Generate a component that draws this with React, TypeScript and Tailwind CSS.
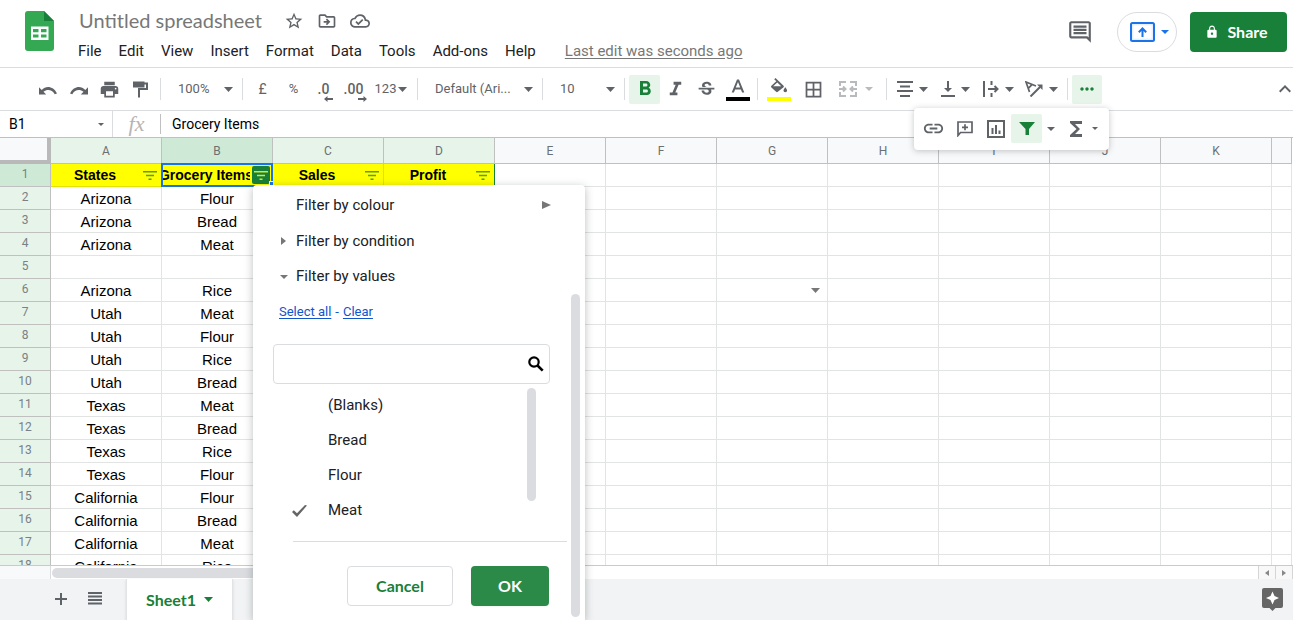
import React from 'react';
import clsx from 'clsx';
import {
  MdBorderAll,
  MdFormatBold,
  MdFormatItalic,
  MdFunctions,
  MdInsertLink,
  MdKeyboardArrowUp,
  MdLock,
  MdMoreHoriz,
  MdOutlineCloudDone,
  MdOutlineDriveFileMove,
  MdOutlineInsertComment,
  MdPrint,
  MdStarBorder,
  MdStrikethroughS,
} from 'react-icons/md';

const menus = ['File', 'Edit', 'View', 'Insert', 'Format', 'Data', 'Tools', 'Add-ons', 'Help'];

const columns = ['A', 'B', 'C', 'D', 'E', 'F', 'G', 'H', 'I', 'J', 'K', ''];

const headers = ['States', 'Grocery Items', 'Sales', 'Profit'];

const rows = [
  ['Arizona', 'Flour'],
  ['Arizona', 'Bread'],
  ['Arizona', 'Meat'],
  ['', ''],
  ['Arizona', 'Rice'],
  ['Utah', 'Meat'],
  ['Utah', 'Flour'],
  ['Utah', 'Rice'],
  ['Utah', 'Bread'],
  ['Texas', 'Meat'],
  ['Texas', 'Bread'],
  ['Texas', 'Rice'],
  ['Texas', 'Flour'],
  ['California', 'Flour'],
  ['California', 'Bread'],
  ['California', 'Meat'],
  ['California', 'Rice'],
];

const filterValues = [
  { label: '(Blanks)', checked: false },
  { label: 'Bread', checked: false },
  { label: 'Flour', checked: false },
  { label: 'Meat', checked: true },
];

const Caret = ({ className = 'h-1 w-2' }: { className?: string }) => (
  <svg viewBox="0 0 8 4" preserveAspectRatio="none" className={clsx('shrink-0 fill-current', className)}>
    <path d="M0 0h8L4 4z" />
  </svg>
);

const Separator = () => <div className="mx-1 h-[22px] w-px shrink-0 bg-[#dadce0]" />;

type ToolProps = {
  label: string;
  className?: string;
  children: React.ReactNode;
};

const Tool = ({ label, className = 'w-[31px]', children }: ToolProps) => (
  <button
    type="button"
    aria-label={label}
    className={clsx('flex h-[29px] shrink-0 items-center justify-center rounded-xs', className)}
  >
    {children}
  </button>
);

const ToolSelect = ({ label, value, className }: { label: string; value: string; className: string }) => (
  <label className={clsx('flex h-[29px] shrink-0 items-center pr-[5px] pl-[13px]', className)}>
    <select aria-label={label} className="min-w-0 flex-1 appearance-none bg-transparent text-[13px] outline-none">
      <option>{value}</option>
    </select>
    <Caret className="h-[5px] w-[9px]" />
  </label>
);

const SheetsLogo = () => (
  <svg viewBox="0 0 29 40" className="h-10 w-[29px] shrink-0">
    <path d="M3 0h16l10 10v27a3 3 0 0 1-3 3H3a3 3 0 0 1-3-3V3a3 3 0 0 1 3-3z" fill="#34a853" />
    <path d="M19 0l10 10H19z" fill="#188038" />
    <path d="M6 15.500h17.500v13.500H6zM8 18v3.200h5.500V18zM16 18v3.200h5.500V18zM8 23.400v3.200h5.500v-3.200zM16 23.400v3.200h5.500v-3.200z" fill="#fff" fillRule="evenodd" />
  </svg>
);

const PresentIcon = () => (
  <svg viewBox="0 0 25 20" className="h-5 w-[25px]">
    <rect x="1" y="1" width="23" height="18" rx="1.500" fill="#e8f0fe" stroke="#1a73e8" strokeWidth="2" />
    <rect x="3.500" y="3.500" width="18" height="13" fill="#fff" />
    <path d="M12.500 15V7M8.800 10.200l3.700-3.700 3.700 3.700" fill="none" stroke="#1a73e8" strokeWidth="2" />
  </svg>
);

const UndoIcon = ({ className }: { className?: string }) => (
  <svg viewBox="0 0 18 9" className={clsx('mt-[2px] h-[9px] w-[18px]', className)}>
    <path d="M0 1.200V8.500h7.200L4.500 5.800C8 3 13 3.300 15.700 8.200l2.300-.8C14.500 0 7 -.9 2.700 3.900z" fill="currentColor" />
  </svg>
);

const PaintIcon = () => (
  <svg viewBox="0 0 15 17" className="h-[17px] w-[15px] fill-none stroke-current">
    <path d="M0 3.500h11.500" strokeWidth="6" />
    <path d="M11 2.500h3v5.500H6v8.500" strokeWidth="2" />
  </svg>
);

const DecimalIcon = ({ text, right }: { text: string; right?: boolean }) => (
  <span className="relative text-sm leading-4 font-medium">
    {text}
    <svg viewBox="0 0 9 6" className={clsx('absolute -right-1 -bottom-[5px] h-[6px] w-[9px] fill-current', right && 'rotate-180')}>
      <path d="M0 3l3.500-3v2H9v2H3.500v2z" />
    </svg>
  </span>
);

const TextColourIcon = () => (
  <svg viewBox="0 0 24 24" className="h-6 w-6">
    <path d="M11 2.500L5.700 15.500h2.200l1.200-3h5.800l1.200 3h2.200L13 2.500h-2zm-1.200 8L12 4.900l2.200 5.600z" fill="currentColor" />
    <path d="M0 20h24v4H0z" fill="#000" />
  </svg>
);

const FillColourIcon = () => (
  <svg viewBox="0 0 24 24" className="h-6 w-6">
    <path d="M16.600 8.800L8.500 1 7.200 2.300l2.100 2L4.400 8.700a1.200 1.200 0 0 0 0 1.800l4.700 4.300c.6.500 1.200.5 1.700 0l5.800-4.500c.4-.5.400-1 0-1.500zM6.200 9.200l4.100-3.800 3.900 3.800zM18.300 10.300s-1.800 2-1.800 3.200a1.800 1.800 0 0 0 3.600 0c0-1.200-1.800-3.200-1.800-3.200z" fill="currentColor" />
    <path d="M0 20h24v4H0z" fill="#ff0" />
  </svg>
);

const MergeIcon = () => (
  <svg viewBox="0 0 18 16" className="h-4 w-[18px] fill-none stroke-current stroke-2">
    <path d="M7 1H1v4M11 1h6v4M7 15H1v-4M11 15h6v-4M0 8h6M18 8h-6M4 5.500L6.500 8 4 10.500M14 5.500L11.500 8l2.500 2.500" />
  </svg>
);

const AlignIcon = () => (
  <svg viewBox="0 0 16 16" className="h-4 w-4 fill-none stroke-current stroke-2">
    <path d="M0 1h16M3 5.500h10M0 10h16M3 15h10" />
  </svg>
);

const BottomIcon = () => (
  <svg viewBox="0 0 14 16" className="h-4 w-[14px] fill-current">
    <path d="M6 0h2v7h3l-4 4-4-4h3zM0 14h14v2H0z" />
  </svg>
);

const WrapIcon = () => (
  <svg viewBox="0 0 16 16" className="h-4 w-4 fill-none stroke-current stroke-2">
    <path d="M1 0v16M8.500 0v4M8.500 12v4M5 8h9M11.500 5l3 3-3 3" />
  </svg>
);

const RotateIcon = () => (
  <svg viewBox="0 0 18 16" className="h-4 w-[18px] fill-none stroke-current">
    <path d="M4.500 11L1 1l10 4M3.500 7.200l4-4" strokeWidth="1.700" />
    <path d="M5.500 15.500L15 6" strokeWidth="2" />
    <path d="M12 3.500h5.500V9z" className="fill-current" stroke="none" />
  </svg>
);

const CommentAddIcon = () => (
  <svg viewBox="0 0 16 16" className="h-4 w-4 fill-none stroke-current">
    <path d="M1 14.500V1h14v10.500H3.500z" strokeWidth="1.700" />
    <path d="M8 3.300v6M5 6.300h6" strokeWidth="1.700" />
  </svg>
);

const ChartIcon = () => (
  <svg viewBox="0 0 18 18" className="h-[18px] w-[18px] fill-none stroke-current stroke-2">
    <path d="M1 1h16v16H1zM5.500 8v6M9 5v9M12.500 10.500V14" />
  </svg>
);

const FunnelIcon = () => (
  <svg viewBox="0 0 16 13" className="h-[13px] w-4 fill-current">
    <path d="M0 0h16L10 7v6H6.500V7z" />
  </svg>
);

const FilterLines = () => (
  <svg viewBox="0 0 14 9" className="h-[9px] w-[14px] fill-current">
    <path d="M0 0h14v1.500H0zM3 3.700h8v1.500H3zM5.500 7.400h3V9h-3z" />
  </svg>
);

const SearchIcon = () => (
  <svg viewBox="0 0 16 16" className="h-4 w-4 shrink-0 fill-none stroke-black">
    <circle cx="6" cy="6" r="4.700" strokeWidth="2.200" />
    <path d="M9.500 9.500l5.200 5.200" strokeWidth="2.600" />
  </svg>
);

const CheckIcon = ({ className }: { className?: string }) => (
  <svg viewBox="0 0 15 12" className={clsx('h-3 w-[15px] fill-[#666]', className)}>
    <path d="M0 7l1.800-1.800L5 8.200 13 0l2 .6L5 12z" />
  </svg>
);

const PlusIcon = () => (
  <svg viewBox="0 0 12 12" className="h-3 w-3 fill-none stroke-current stroke-2">
    <path d="M6 0v12M0 6h12" />
  </svg>
);

const ListIcon = () => (
  <svg viewBox="0 0 14 13" className="h-[13px] w-[14px] fill-current">
    <path d="M0 0h14v2H0zM0 3.500h14v2H0zM0 7h14v2H0zM0 10.500h14v2H0z" />
  </svg>
);

const ExploreIcon = () => (
  <svg viewBox="0 0 21 23" className="h-[23px] w-[21px]">
    <path d="M2 0h17a2 2 0 0 1 2 2v16a2 2 0 0 1-2 2h-5.500l-3 3-3-3H2a2 2 0 0 1-2-2V2a2 2 0 0 1 2-2z" fill="#666" />
    <path d="M10.500 3.500l2 4.500 4.500 2-4.500 2-2 4.500-2-4.500L4 10l4.500-2z" fill="#fff" />
  </svg>
);

const Header = () => (
  <header className="flex h-[68px] shrink-0 border-b border-[#dadce0] pr-[6px] pl-[25px]">
    <div className="pt-[11px]">
      <SheetsLogo />
    </div>
    <div className="ml-4 flex-1 pt-[6px]">
      <div className="flex items-center text-[#5f6368]">
        <input
          aria-label="Title"
          defaultValue="Untitled spreadsheet"
          className="ml-[9px] h-7 w-[205px] bg-transparent font-[Lato,sans-serif] text-xl text-[#777] outline-none"
        />
        <div className="flex gap-[13px] pt-[2px]">
          <button type="button" aria-label="Star"><MdStarBorder size={20} /></button>
          <button type="button" aria-label="Move"><MdOutlineDriveFileMove size={20} /></button>
          <button type="button" aria-label="Document status"><MdOutlineCloudDone size={20} /></button>
        </div>
      </div>
      <nav className="flex h-[34px] items-center gap-px text-[15px] text-[#202124]">
        {menus.map((menu) => (
          <button key={menu} type="button" className="px-2">{menu}</button>
        ))}
        <a href="#history" className="ml-5 text-[#777] underline underline-offset-2">Last edit was seconds ago</a>
      </nav>
    </div>
    <div className="flex items-start pt-3">
      <button type="button" aria-label="Comments" className="mr-6 flex h-10 items-center text-[#5f6368]">
        <MdOutlineInsertComment size={26} />
      </button>
      <button type="button" aria-label="Present" className="mr-[13px] flex h-10 w-[60px] items-center justify-center gap-[6px] rounded-full border border-[#dadce0] pl-[5px] text-[#1a73e8]">
        <PresentIcon />
        <Caret />
      </button>
      <button type="button" className="flex h-10 w-[97px] items-center justify-center gap-2 rounded bg-[#188038] pr-1 font-[Lato,sans-serif] text-base font-bold text-white">
        <MdLock size={14} />
        Share
      </button>
    </div>
  </header>
);

const MoreTools = () => (
  <div className="absolute top-[33px] -right-[7px] z-20 flex h-[42px] w-[195px] items-center rounded bg-white pl-1 shadow-[0_1px_6px_rgba(60,64,67,0.3)]">
    <Tool label="Insert link"><MdInsertLink size={23} /></Tool>
    <Tool label="Insert comment"><CommentAddIcon /></Tool>
    <Tool label="Insert chart"><ChartIcon /></Tool>
    <Tool label="Filter" className="w-[31px] bg-[#e6f4ea] text-[#188038]"><FunnelIcon /></Tool>
    <Tool label="Filter views" className="w-[17px]"><Caret /></Tool>
    <Tool label="Functions" className="w-[44px] gap-1"><MdFunctions size={24} /><Caret className="h-[3px] w-[6px]" /></Tool>
  </div>
);

const Toolbar = () => (
  <div className="flex h-[43px] shrink-0 items-center border-b border-[#dadce0] pl-8 text-[13px] text-[#5f6368]">
    <Tool label="Undo"><UndoIcon /></Tool>
    <Tool label="Redo"><UndoIcon className="-scale-x-100" /></Tool>
    <Tool label="Print"><MdPrint size={21} /></Tool>
    <Tool label="Paint format"><PaintIcon /></Tool>
    <Separator />
    <ToolSelect label="Zoom" value="100%" className="w-[73px]" />
    <Separator />
    <Tool label="Currency"><span className="text-sm">£</span></Tool>
    <Tool label="Per cent">%</Tool>
    <Tool label="Decrease decimal places" className="w-[29px]"><DecimalIcon text=".0" /></Tool>
    <Tool label="Increase decimal places"><DecimalIcon text=".00" right /></Tool>
    <Tool label="More formats" className="w-11 gap-[2px]">
      <span>123</span>
      <Caret className="h-[5px] w-[9px]" />
    </Tool>
    <Separator />
    <ToolSelect label="Font" value="Default (Ari..." className="w-[116px]" />
    <Separator />
    <ToolSelect label="Font size" value="10" className="w-[73px]" />
    <Separator />
    <Tool label="Bold" className="w-[31px] bg-[#e6f4ea] text-[#188038]"><MdFormatBold size={24} /></Tool>
    <Tool label="Italic"><MdFormatItalic size={23} /></Tool>
    <Tool label="Strikethrough"><MdStrikethroughS size={21} /></Tool>
    <Tool label="Text colour"><TextColourIcon /></Tool>
    <Separator />
    <Tool label="Fill colour" className="w-[34px]"><FillColourIcon /></Tool>
    <Tool label="Borders" className="w-[34px]"><MdBorderAll size={21} /></Tool>
    <Tool label="Merge cells" className="w-[52px] gap-2 text-[#b8babd]"><MergeIcon /><Caret /></Tool>
    <Separator />
    <Tool label="Horizontal align" className="w-[43px] gap-[6px]"><AlignIcon /><Caret className="h-[5px] w-[9px]" /></Tool>
    <Tool label="Vertical align" className="w-[43px] gap-[6px]"><BottomIcon /><Caret className="h-[5px] w-[9px]" /></Tool>
    <Tool label="Text wrapping" className="w-[43px] gap-[6px]"><WrapIcon /><Caret className="h-[5px] w-[9px]" /></Tool>
    <Tool label="Text rotation" className="w-[43px] gap-[6px]"><RotateIcon /><Caret className="h-[5px] w-[9px]" /></Tool>
    <Separator />
    <div className="relative">
      <Tool label="More" className="w-[30px] bg-[#e6f4ea] text-[#188038]"><MdMoreHoriz size={20} /></Tool>
      <MoreTools />
    </div>
    <Tool label="Hide the menus" className="-mr-2 ml-auto w-8"><MdKeyboardArrowUp size={24} /></Tool>
  </div>
);

const FormulaBar = () => (
  <div className="flex h-[27px] shrink-0 items-center border-b border-[#c0c0c0] text-sm text-black">
    <input aria-label="Name box" defaultValue="B1" className="w-[98px] pl-[9px] outline-none" />
    <Caret className="h-[3px] w-[6px] text-[#5f6368]" />
    <div className="ml-2 h-[26px] w-px bg-[#dadce0]" />
    <span className="w-[47px] text-center font-['Liberation_Serif',serif] text-[22px] leading-6 text-[#b5b5b5] italic">fx</span>
    <div className="h-5 w-px bg-[#c0c0c0]" />
    <input aria-label="Formula" defaultValue="Grocery Items" className="flex-1 pl-[11px] outline-none" />
  </div>
);

const HeaderCell = ({ text, active }: { text: string; active: boolean }) => (
  <td className={clsx('relative border-r border-b border-[#e2e300] bg-[#ff0] p-0', text === 'Profit' && 'border-r-[#188038]')}>
    <div className="flex h-[22px] items-center">
      <div className="mr-[2px] flex flex-1 justify-center overflow-hidden text-sm font-bold whitespace-nowrap">{text}</div>
      <button
        type="button"
        aria-label={`Filter ${text}`}
        className={clsx(
          'mr-[2px] flex h-[18px] w-[18px] shrink-0 items-center justify-center rounded-xs',
          active ? 'bg-[#188038] text-[#ceea3a]' : 'text-[#5a9e1c]'
        )}
      >
        <FilterLines />
      </button>
    </div>
    {active && (
      <>
        <div className="pointer-events-none absolute -top-px -right-px -bottom-px -left-px border-2 border-[#1a73e8]" />
        <div className="absolute -right-[3px] -bottom-px h-[6px] w-[6px] border border-white bg-[#1a73e8]" />
      </>
    )}
  </td>
);

const Sheet = () => (
  <main className="min-h-0 flex-1 overflow-hidden border-b border-[#c9cacc] pr-px">
    <table className="w-full table-fixed border-separate border-spacing-0 text-center">
      <colgroup>
        <col className="w-[51px]" />
        {columns.map((column, i) => (
          <col key={i} className={column ? 'w-[111px]' : ''} />
        ))}
      </colgroup>
      <thead>
        <tr className="h-[26px] text-xs text-[#6b7075]">
          <th className="border-r-4 border-b-4 border-[#b9b9b9] bg-[#f8f9fa] p-0" />
          {columns.map((column, i) => (
            <th
              key={i}
              className={clsx(
                'border-r border-b border-[#c0c0c0] p-0 font-normal',
                i === 1 ? 'bg-[#ceead6]' : i < 4 ? 'bg-[#e6f4ea]' : 'bg-[#f8f9fa]'
              )}
            >
              {column}
            </th>
          ))}
        </tr>
      </thead>
      <tbody className="font-['Liberation_Sans',Arial,sans-serif] text-[15px] text-black">
        <tr className="h-[23px]">
          <th className="border-r border-b border-[#c0c0c0] bg-[#ceead6] p-0 pb-[2px] font-[Roboto,sans-serif] text-xs font-normal text-[#7a8085]">1</th>
          {headers.map((text) => (
            <HeaderCell key={text} text={text} active={text === 'Grocery Items'} />
          ))}
          {columns.slice(4).map((_, i) => (
            <td key={i} className="border-r border-b border-[#e2e3e3] p-0" />
          ))}
        </tr>
        {rows.map((row, r) => (
          <tr key={r} className="h-[23px]">
            <th className="border-r border-b border-[#c0c0c0] bg-[#e6f4ea] p-0 pb-[2px] font-[Roboto,sans-serif] text-xs font-normal text-[#7a8085]">{r + 2}</th>
            {columns.map((_, c) => (
              <td key={c} className="border-r border-b border-[#e2e3e3] p-0 pt-px leading-[21px]">
                {row[c]}
                {r === 4 && c === 6 && (
                  <button type="button" aria-label="Show options" className="flex w-full justify-end pr-[7px] text-[#777]">
                    <Caret className="h-[5px] w-[9px]" />
                  </button>
                )}
              </td>
            ))}
          </tr>
        ))}
      </tbody>
    </table>
  </main>
);

const FilterMenu = () => (
  <div className="absolute top-[185px] bottom-0 left-[253px] z-10 w-[332px] overflow-hidden rounded-t bg-white pt-[2px] text-[15px] text-[#202124] shadow-[0_2px_8px_rgba(60,64,67,0.35)]">
    <button type="button" className="flex h-9 w-full items-center pr-[34px] pl-[43px]">
      Filter by colour
      <svg viewBox="0 0 9 8" className="ml-auto h-2 w-[9px] fill-[#777]"><path d="M0 0l9 4-9 4z" /></svg>
    </button>
    <button type="button" className="flex h-9 w-full items-center pl-[28px]">
      <svg viewBox="0 0 5 8" className="mr-[10px] h-2 w-[5px] fill-[#777]"><path d="M0 0l5 4-5 4z" /></svg>
      Filter by condition
    </button>
    <button type="button" className="flex h-[35px] w-full items-center pl-[27px]">
      <Caret className="mr-2 h-1 w-2 text-[#777]" />
      Filter by values
    </button>
    <div className="flex h-9 items-center gap-1 pl-[26px] text-[13px] text-[#1155cc]">
      <a href="#all" className="underline underline-offset-2">Select all</a>
      -
      <a href="#clear" className="underline underline-offset-2">Clear</a>
    </div>
    <div className="mt-[14px] mr-[35px] ml-5 flex h-10 items-center rounded border border-[#dadce0] pr-[5px]">
      <input aria-label="Search values" className="h-full min-w-0 flex-1 px-3 outline-none" />
      <SearchIcon />
    </div>
    <div className="mt-1 mr-[49px] ml-[38px] flex">
      <ul className="flex-1">
        {filterValues.map((item) => (
          <li key={item.label}>
            <label className="relative flex h-[35px] items-center">
              <input type="checkbox" defaultChecked={item.checked} className="peer mr-5 h-4 w-[17px] appearance-none" />
              <CheckIcon className="absolute left-px hidden peer-checked:block" />
              {item.label}
            </label>
          </li>
        ))}
      </ul>
      <div className="h-[113px] w-[9px] rounded-full bg-[#dadce0]" />
    </div>
    <div className="mt-[13px] mr-[18px] ml-10 h-px bg-[#dadce0]" />
    <div className="mt-6 mr-9 flex justify-end gap-[18px] font-[Lato,sans-serif] text-base font-bold">
      <button type="button" className="h-10 w-[106px] rounded border border-[#dadce0] text-[#188038]">Cancel</button>
      <button type="button" className="h-10 w-[78px] rounded bg-[#2b8a48] text-white shadow-xs">OK</button>
    </div>
    <div className="absolute top-[109px] right-[5px] bottom-[3px] w-[9px] rounded-full bg-[#dadce0]" />
  </div>
);

const ScrollRow = () => (
  <div className="flex h-[13px] shrink-0">
    <div className="w-[51px] border-r border-[#dadce0] bg-[#f8f9fa]" />
    <div className="flex flex-1 items-center pl-px">
      <div className="h-[10px] w-2/5 rounded-full bg-[#dadce0]" />
    </div>
    <button type="button" aria-label="Scroll left" className="flex w-[17px] items-center justify-center border-l border-[#d5d5d5] bg-[#f8f8f8]">
      <svg viewBox="0 0 4 6" className="h-[6px] w-1 fill-[#888]"><path d="M4 0L0 3l4 3z" /></svg>
    </button>
    <button type="button" aria-label="Scroll right" className="flex w-[18px] items-center justify-center border-x border-[#d5d5d5] bg-[#f8f8f8]">
      <svg viewBox="0 0 4 6" className="h-[6px] w-1 fill-[#888]"><path d="M0 0l4 3-4 3z" /></svg>
    </button>
  </div>
);

const Footer = () => (
  <footer className="flex h-[41px] shrink-0 items-center bg-[#f1f3f4] pr-[10px] pl-[55px] text-[#5f6368]">
    <div className="flex items-center gap-[21px] pb-[2px]">
      <button type="button" aria-label="Add sheet"><PlusIcon /></button>
      <button type="button" aria-label="All sheets"><ListIcon /></button>
    </div>
    <button type="button" className="ml-6 flex h-full w-[107px] items-center justify-center gap-2 border-x border-[#e2e3e5] bg-white font-[Lato,sans-serif] text-base font-bold text-[#188038] shadow-sm">
      Sheet1
      <Caret className="h-[5px] w-[9px]" />
    </button>
    <button type="button" aria-label="Explore" className="ml-auto"><ExploreIcon /></button>
  </footer>
);

const App = () => {
  return (
    <div className="relative flex h-screen flex-col overflow-hidden bg-white font-[Roboto,sans-serif]">
      <Header />
      <Toolbar />
      <FormulaBar />
      <Sheet />
      <ScrollRow />
      <Footer />
      <FilterMenu />
    </div>
  );
};

export default App;
